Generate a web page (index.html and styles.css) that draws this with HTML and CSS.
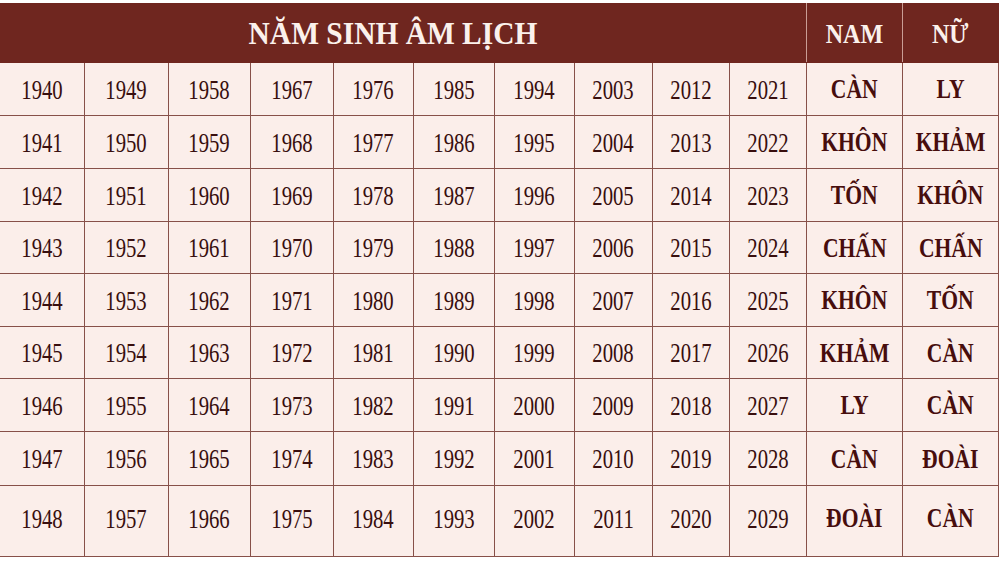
FILE: index.html
```html
<!DOCTYPE html>
<html lang="vi">
<head>
<meta charset="utf-8">
<title>Năm sinh âm lịch</title>
<link rel="stylesheet" href="styles.css">
</head>
<body>
<table class="tbl">
  <colgroup>
    <col class="w84"><col class="w84"><col class="w82"><col class="w83"><col class="w80"><col class="w81"><col class="w80"><col class="w78"><col class="w77"><col class="w77"><col class="w96"><col class="w96">
  </colgroup>
  <thead>
    <tr class="head">
      <th colspan="10" class="title"><span class="t">NĂM SINH ÂM LỊCH</span></th>
      <th class="sex"><span class="s">NAM</span></th>
      <th class="sex"><span class="s">NỮ</span></th>
    </tr>
  </thead>
  <tbody>
    <tr class="r53"><td><span class="n">1940</span></td><td><span class="n">1949</span></td><td><span class="n">1958</span></td><td><span class="n">1967</span></td><td><span class="n">1976</span></td><td><span class="n">1985</span></td><td><span class="n">1994</span></td><td><span class="n">2003</span></td><td><span class="n">2012</span></td><td><span class="n">2021</span></td><td class="g"><span class="b">CÀN</span></td><td class="g"><span class="b">LY</span></td></tr>
    <tr class="r53"><td><span class="n">1941</span></td><td><span class="n">1950</span></td><td><span class="n">1959</span></td><td><span class="n">1968</span></td><td><span class="n">1977</span></td><td><span class="n">1986</span></td><td><span class="n">1995</span></td><td><span class="n">2004</span></td><td><span class="n">2013</span></td><td><span class="n">2022</span></td><td class="g"><span class="b">KHÔN</span></td><td class="g"><span class="b">KHẢM</span></td></tr>
    <tr class="r53"><td><span class="n">1942</span></td><td><span class="n">1951</span></td><td><span class="n">1960</span></td><td><span class="n">1969</span></td><td><span class="n">1978</span></td><td><span class="n">1987</span></td><td><span class="n">1996</span></td><td><span class="n">2005</span></td><td><span class="n">2014</span></td><td><span class="n">2023</span></td><td class="g"><span class="b">TỐN</span></td><td class="g"><span class="b">KHÔN</span></td></tr>
    <tr class="r52"><td><span class="n">1943</span></td><td><span class="n">1952</span></td><td><span class="n">1961</span></td><td><span class="n">1970</span></td><td><span class="n">1979</span></td><td><span class="n">1988</span></td><td><span class="n">1997</span></td><td><span class="n">2006</span></td><td><span class="n">2015</span></td><td><span class="n">2024</span></td><td class="g"><span class="b">CHẤN</span></td><td class="g"><span class="b">CHẤN</span></td></tr>
    <tr class="r53"><td><span class="n">1944</span></td><td><span class="n">1953</span></td><td><span class="n">1962</span></td><td><span class="n">1971</span></td><td><span class="n">1980</span></td><td><span class="n">1989</span></td><td><span class="n">1998</span></td><td><span class="n">2007</span></td><td><span class="n">2016</span></td><td><span class="n">2025</span></td><td class="g"><span class="b">KHÔN</span></td><td class="g"><span class="b">TỐN</span></td></tr>
    <tr class="r52"><td><span class="n">1945</span></td><td><span class="n">1954</span></td><td><span class="n">1963</span></td><td><span class="n">1972</span></td><td><span class="n">1981</span></td><td><span class="n">1990</span></td><td><span class="n">1999</span></td><td><span class="n">2008</span></td><td><span class="n">2017</span></td><td><span class="n">2026</span></td><td class="g"><span class="b">KHẢM</span></td><td class="g"><span class="b">CÀN</span></td></tr>
    <tr class="r53"><td><span class="n">1946</span></td><td><span class="n">1955</span></td><td><span class="n">1964</span></td><td><span class="n">1973</span></td><td><span class="n">1982</span></td><td><span class="n">1991</span></td><td><span class="n">2000</span></td><td><span class="n">2009</span></td><td><span class="n">2018</span></td><td><span class="n">2027</span></td><td class="g"><span class="b">LY</span></td><td class="g"><span class="b">CÀN</span></td></tr>
    <tr class="r54"><td><span class="n">1947</span></td><td><span class="n">1956</span></td><td><span class="n">1965</span></td><td><span class="n">1974</span></td><td><span class="n">1983</span></td><td><span class="n">1992</span></td><td><span class="n">2001</span></td><td><span class="n">2010</span></td><td><span class="n">2019</span></td><td><span class="n">2028</span></td><td class="g"><span class="b">CÀN</span></td><td class="g"><span class="b">ĐOÀI</span></td></tr>
    <tr class="r71 last"><td><span class="n">1948</span></td><td><span class="n">1957</span></td><td><span class="n">1966</span></td><td><span class="n">1975</span></td><td><span class="n">1984</span></td><td><span class="n">1993</span></td><td><span class="n">2002</span></td><td><span class="n">2011</span></td><td><span class="n">2020</span></td><td><span class="n">2029</span></td><td class="g"><span class="b">ĐOÀI</span></td><td class="g"><span class="b">CÀN</span></td></tr>
  </tbody>
</table>
</body>
</html>
```
FILE: styles.css
```css
html, body {
  margin: 0;
  padding: 0;
  background: #ffffff;
}
body {
  padding-top: 3px;
  font-family: "Liberation Serif", "Times New Roman", serif;
}
.tbl {
  border-collapse: collapse;
  table-layout: fixed;
  width: 999px;
}
.w84 { width: 84px; }
.w82 { width: 82px; }
.w83 { width: 83px; }
.w80 { width: 80px; }
.w81 { width: 81px; }
.w78 { width: 78px; }
.w77 { width: 77px; }
.w96 { width: 96px; }

.head { height: 59px; }
.head th {
  background: #6f261f;
  color: #fbf1ec;
  padding: 3px 0 0 0;
  font-weight: bold;
  text-align: center;
  vertical-align: middle;
  border: 0;
  border-bottom: 1px solid #6f261f;
}
.head th.title {
  padding-right: 20px;
}
.head th.sex {
  border-left: 1.5px solid #c99d95;
}
.t {
  display: inline-block;
  font-size: 31px;
  transform: scaleX(0.95);
}
.s {
  display: inline-block;
  font-size: 28px;
  transform: scaleX(0.86);
}
.r53 { height: 53px; }
.r52 { height: 52px; }
.r54 { height: 54px; }
.r71 { height: 71px; }
td {
  background: #fbeeea;
  border: 1.5px solid #875049;
  padding: 2px 0 0 0;
  text-align: center;
  vertical-align: middle;
  color: #380e0e;
}
.last td {
  padding: 0 0 4px 0;
}
tbody tr td:first-child { border-left: 0; }
tbody tr:first-child td { border-top: 0; }
.n {
  display: inline-block;
  font-size: 28px;
  transform: scaleX(0.74);
}
.b {
  display: inline-block;
  font-size: 27px;
  font-weight: bold;
  color: #470d0d;
  transform: scaleX(0.8);
}
```
